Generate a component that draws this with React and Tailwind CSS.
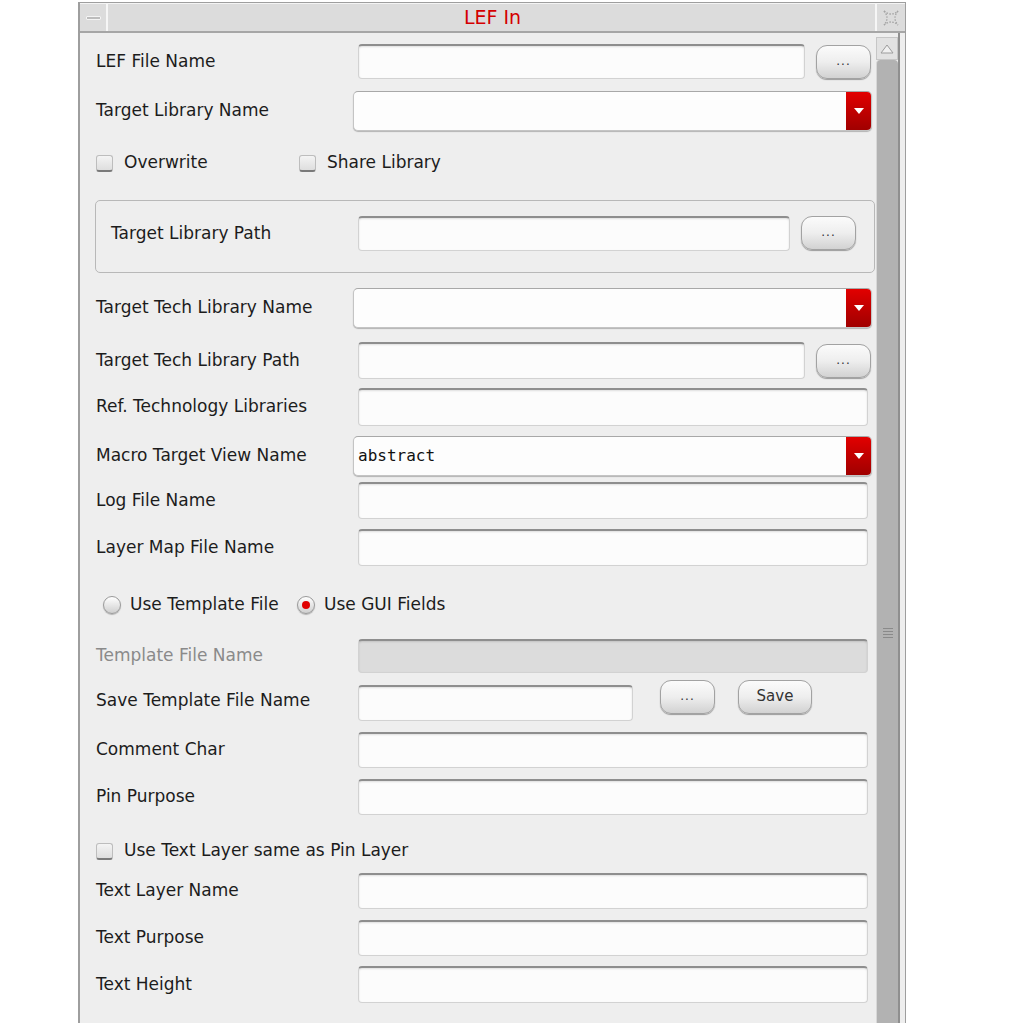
import React from 'react'

const font = { fontFamily: '"DejaVu Sans", "Liberation Sans", sans-serif' }

function TextBox({ className = '', disabled = false }) {
  return (
    <div
      className={`h-full rounded-[4px] border border-[#d2d2d2] border-t-2 border-t-[#8e8e8e] shadow-[inset_0_1px_2px_rgba(0,0,0,0.12)] ${disabled ? 'bg-[#dcdcdc]' : 'bg-[#fcfcfc]'} ${className}`}
    ></div>
  )
}

function DotsButton({ className = '', label = '...' }) {
  return (
    <div
      className={`h-[34px] flex items-center justify-center rounded-[11px] border border-[#a2a2a2] bg-gradient-to-b from-[#fbfbfb] via-[#eeeeee] to-[#d2d2d2] shadow-[0_1px_1px_rgba(0,0,0,0.35)] text-[#333] ${className}`}
    >
      <span className={label === '...' ? 'text-[12px] tracking-[1px] -mt-[2px]' : 'text-[15px] -mt-[2px]'}>{label}</span>
    </div>
  )
}

function Combo({ value }) {
  return (
    <div className="w-[519px] h-[40px] flex rounded-[5px] border border-[#c4c4c4] border-t-[#a8a8a8] bg-[#fdfdfd] shadow-[0_1px_1px_rgba(0,0,0,0.25)] overflow-hidden">
      <div className="flex-1 flex items-center pl-[4px] text-[16px] text-[#111]" style={{ fontFamily: '"DejaVu Sans Mono", "Liberation Mono", monospace' }}>
        {value}
      </div>
      <div className="w-[25px] h-full flex items-center justify-center bg-gradient-to-b from-[#e20000] to-[#a00000]">
        <svg width="10" height="6" viewBox="0 0 10 6"><path d="M0 0 H10 L5 6 Z" fill="#fff" /></svg>
      </div>
    </div>
  )
}

function Check({ label }) {
  return (
    <div className="flex items-center">
      <div className="w-[17px] h-[17px] rounded-[3px] border border-[#bdbdbd] border-b-2 border-b-[#7a7a7a] bg-gradient-to-b from-[#f4f4f4] to-[#dedede]"></div>
      <span className="ml-[11px]">{label}</span>
    </div>
  )
}

function Radio({ label, on }) {
  return (
    <div className="flex items-center">
      <div className="w-[18px] h-[18px] rounded-full border border-[#9a9a9a] bg-gradient-to-b from-[#ffffff] to-[#cfcfcf] shadow-[0_1px_1px_rgba(0,0,0,0.25)] flex items-center justify-center">
        {on && <div className="w-[8px] h-[8px] rounded-full bg-[#e00000]"></div>}
      </div>
      <span className="ml-[9px]">{label}</span>
    </div>
  )
}

function Row({ label, h, mt, children, labelW = 262, muted }) {
  return (
    <div className="flex items-center pl-[16px]" style={{ height: h, marginTop: mt }}>
      <div className={`shrink-0 ${muted ? 'text-[#8a8a8a]' : ''}`} style={{ width: labelW }}>{label}</div>
      {children}
    </div>
  )
}

export default function App() {
  return (
    <div className="w-full h-[1023px] bg-white overflow-hidden text-[17px] text-[#1c1c1c]" style={font}>
      <div className="ml-[78px] mt-[2px] w-[828px] h-[1040px] border-l-2 border-r border-t border-[#9e9e9e] bg-[#eeeeee] flex flex-col">
        {/* title bar */}
        <div className="h-[30px] flex bg-[#dcdcdc] border-b-2 border-[#a6a6a6] border-t border-t-[#f4f4f4]">
          <div className="w-[28px] h-full border-r-2 border-[#f6f6f6] flex items-center justify-center">
            <div className="w-[15px] h-[4px] rounded-[1px] bg-[#bcbcbc] border border-[#f4f4f4]"></div>
          </div>
          <div className="flex-1 flex items-center justify-center text-[19px] text-[#d40000] pl-[2px]">LEF In</div>
          <div className="w-[30px] h-full border-l-2 border-[#f6f6f6] flex items-center justify-center">
            <svg width="20" height="20" viewBox="0 0 20 20" fill="none" stroke="#a4a4a4" strokeWidth="1.3" strokeDasharray="1.6 1.4">
              <path d="M3 3 Q10 9 17 3" />
              <path d="M3 17 Q10 11 17 17" />
              <path d="M3 3 Q9 10 3 17" />
              <path d="M17 3 Q11 10 17 17" />
            </svg>
          </div>
        </div>

        <div className="flex flex-1">
          {/* content */}
          <div className="w-[796px] flex flex-col">
            <Row label="LEF File Name" h={35} mt={11}>
              <TextBox className="w-[447px]" />
              <DotsButton className="ml-[11px] w-[55px]" />
            </Row>
            <Row label="Target Library Name" h={40} mt={12} labelW={257}>
              <Combo />
            </Row>
            <div className="flex items-center pl-[16px] h-[20px] mt-[22px]">
              <div className="w-[203px]"><Check label="Overwrite" /></div>
              <Check label="Share Library" />
            </div>

            <div className="ml-[15px] w-[780px] h-[73px] mt-[27px] rounded-[5px] border border-[#b8b8b8] flex items-start pl-[15px] pt-[15px]">
              <div className="w-[247px] shrink-0 h-[35px] flex items-center">Target Library Path</div>
              <div className="h-[35px] flex">
                <TextBox className="w-[432px]" />
                <DotsButton className="ml-[11px] w-[55px]" />
              </div>
            </div>

            <Row label="Target Tech Library Name" h={40} mt={15} labelW={257}>
              <Combo />
            </Row>
            <Row label="Target Tech Library Path" h={37} mt={14}>
              <TextBox className="w-[447px]" />
              <DotsButton className="ml-[11px] w-[55px]" />
            </Row>
            <Row label="Ref. Technology Libraries" h={38} mt={9}>
              <TextBox className="w-[510px]" />
            </Row>
            <Row label="Macro Target View Name" h={40} mt={10} labelW={257}>
              <Combo value="abstract" />
            </Row>
            <Row label="Log File Name" h={37} mt={6}>
              <TextBox className="w-[510px]" />
            </Row>
            <Row label="Layer Map File Name" h={37} mt={10}>
              <TextBox className="w-[510px]" />
            </Row>

            <div className="flex items-center pl-[23px] h-[20px] mt-[29px]">
              <div className="w-[194px]"><Radio label="Use Template File" /></div>
              <Radio label="Use GUI Fields" on />
            </div>

            <Row label="Template File Name" h={34} mt={24} muted>
              <TextBox className="w-[510px]" disabled />
            </Row>
            <Row label="Save Template File Name" h={41} mt={7}>
              <div className="h-full flex items-start">
                <div className="h-[36px] mt-[5px]"><TextBox className="w-[275px]" /></div>
                <DotsButton className="ml-[27px] w-[55px]" />
                <DotsButton className="ml-[23px] w-[74px]" label="Save" />
              </div>
            </Row>
            <Row label="Comment Char" h={36} mt={11}>
              <TextBox className="w-[510px]" />
            </Row>
            <Row label="Pin Purpose" h={36} mt={11}>
              <TextBox className="w-[510px]" />
            </Row>

            <div className="flex items-center pl-[16px] h-[20px] mt-[26px]">
              <Check label="Use Text Layer same as Pin Layer" />
            </div>

            <Row label="Text Layer Name" h={36} mt={12}>
              <TextBox className="w-[510px]" />
            </Row>
            <Row label="Text Purpose" h={36} mt={11}>
              <TextBox className="w-[510px]" />
            </Row>
            <Row label="Text Height" h={37} mt={10}>
              <TextBox className="w-[510px]" />
            </Row>
          </div>

          {/* scrollbar */}
          <div className="w-[24px] pt-[4px] flex flex-col border-r-2 border-[#8f8f8f]">
            <div className="h-[23px] bg-[#e2e2e2] border border-[#c6c6c6] flex items-center justify-center">
              <svg width="14" height="10" viewBox="0 0 14 10"><path d="M1 9 L7 1 L13 9 Z" fill="#f0f0f0" stroke="#9c9c9c" /></svg>
            </div>
            <div className="flex-1 bg-[#b2b2b2] border-l border-[#d8d8d8] rounded-t-[4px] flex flex-col items-center pt-[568px]">
              <div className="w-[10px] flex flex-col gap-[2px]">
                <div className="h-px bg-[#8a8a8a]"></div>
                <div className="h-px bg-[#8a8a8a]"></div>
                <div className="h-px bg-[#8a8a8a]"></div>
                <div className="h-px bg-[#8a8a8a]"></div>
              </div>
            </div>
          </div>
        </div>
      </div>
    </div>
  )
}
